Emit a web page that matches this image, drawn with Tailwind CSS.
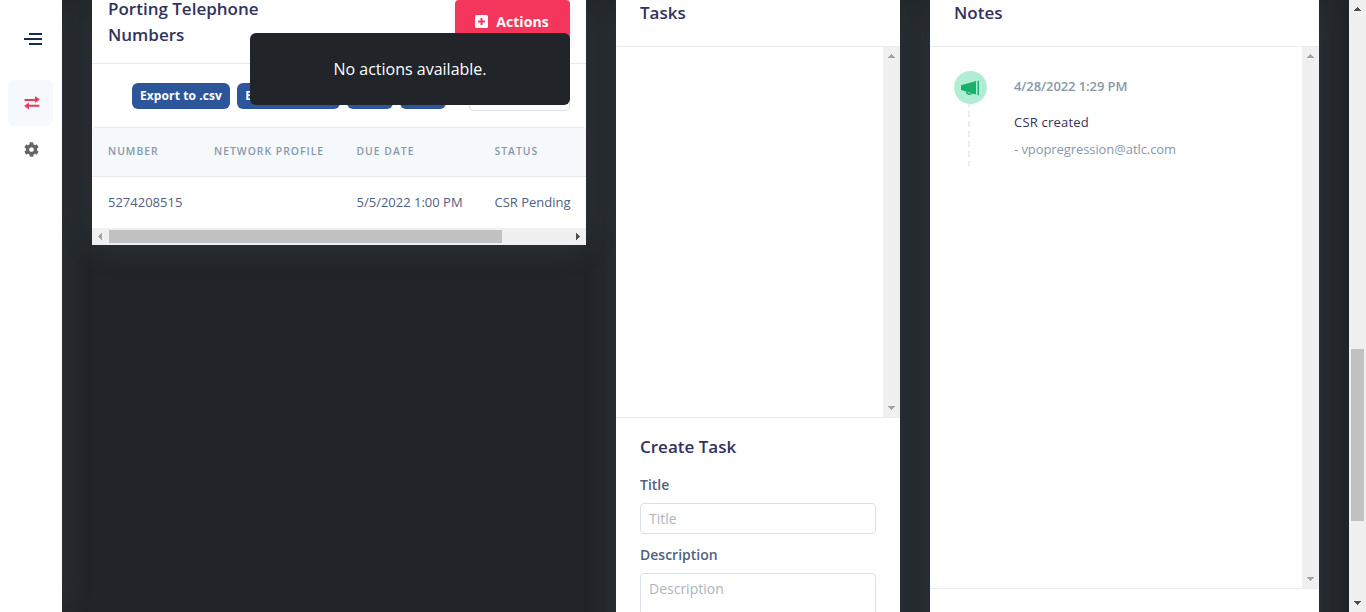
<!DOCTYPE html>
<html lang="en">
<head>
<meta charset="utf-8">
<title>Porting Order</title>
<script src="https://cdn.jsdelivr.net/npm/@tailwindcss/browser@4"></script>
</head>
<body class="h-[612px] overflow-hidden bg-[#212529] font-['Open_Sans',sans-serif] text-[#525f7f]">
<div class="flex h-[612px] w-[1366px] overflow-hidden">
  <nav class="flex w-[62px] shrink-0 flex-col items-center bg-white shadow-[0_0_32px_rgba(136,152,170,0.15)]">
    <button class="mt-[32px] flex h-[14px] w-[62px] justify-center pl-1" aria-label="Menu">
      <svg class="h-[14px] w-[18px]" viewBox="0 0 18 14" shape-rendering="crispEdges" fill="#172b4d"><path d="M5 1h13v2H5zM0 6h18v2H0zM5 11h13v2H5z"/></svg>
    </button>
    <a class="mt-[34px] mr-px flex h-[46px] w-[45px] items-center justify-center rounded-md bg-[#f6f9fc]">
      <svg class="ml-[2px] h-[14px] w-[16px] -translate-y-px" viewBox="0 0 16 14" fill="#f5365c"><path d="M1 4h10V1.700q0-.8.7-.2l3.600 2.500q.5.5 0 1l-3.600 2.500q-.7.5-.7-.2V6H1q-.5 0-.5-.5v-1Q.5 4 1 4z"/><path d="M15 9.700H5V8.100q0-.8-.7-.2l-3.600 2.500q-.5.5 0 1l3.600 2.500q.7.5.7-.2v-2H15q.5 0 .5-.5v-1q0-.5-.5-.5z"/></svg>
    </a>
    <svg class="mt-4 h-[15px] w-[15px]" viewBox="0 0 512 512" fill="#666"><path d="M487.400 315.700l-42.600-24.600c4.300-23.200 4.300-47 0-70.200l42.600-24.600c4.900-2.800 7.100-8.600 5.500-14-11.100-35.600-30-67.800-54.700-94.600-3.800-4.100-10-5.100-14.800-2.300L380.800 110c-17.900-15.400-38.500-27.300-60.800-35.100V25.800c0-5.600-3.900-10.500-9.400-11.700-36.700-8.200-74.300-7.800-109.200 0-5.500 1.200-9.400 6.100-9.400 11.700V75c-22.200 7.900-42.800 19.800-60.800 35.100L88.700 85.500c-4.900-2.800-11-1.900-14.800 2.300-24.700 26.700-43.600 58.900-54.700 94.600-1.700 5.400.6 11.200 5.500 14L67.300 221c-4.300 23.200-4.300 47 0 70.200l-42.600 24.600c-4.900 2.800-7.100 8.600-5.500 14 11.100 35.600 30 67.800 54.700 94.600 3.800 4.100 10 5.100 14.800 2.300l42.600-24.600c17.900 15.400 38.500 27.300 60.800 35.100v49.200c0 5.600 3.900 10.500 9.400 11.700 36.700 8.200 74.300 7.800 109.200 0 5.500-1.200 9.400-6.100 9.400-11.700v-49.200c22.200-7.900 42.800-19.800 60.800-35.100l42.600 24.600c4.900 2.800 11 1.900 14.800-2.300 24.700-26.700 43.600-58.900 54.700-94.600 1.500-5.500-.7-11.300-5.600-14.100zM256 336c-44.100 0-80-35.900-80-80s35.900-80 80-80 80 35.900 80 80-35.900 80-80 80z"/></svg>
  </nav>

  <main class="flex min-w-0 flex-1 items-start gap-[30px] px-[30px]">
    <section class="relative h-[245px] w-[494px] shrink-0 bg-white shadow-[0_0_32px_rgba(136,152,170,0.15)]">
      <header class="flex h-16 items-end justify-between border-b border-[#e9ecef] px-4">
        <h3 class="mb-[15px] w-[200px] text-[17px] leading-[26px] font-semibold text-[#32325d]">Porting Telephone Numbers</h3>
        <button class="mb-5 flex h-[43px] w-[115px] items-center justify-center gap-2 rounded bg-[#f5365c] text-sm font-bold tracking-[0.1px] text-white shadow-[0_4px_6px_rgba(50,50,93,0.11)]">
          <svg class="-ml-px h-[13px] w-[13px]" viewBox="0 0 13 13"><rect width="13" height="13" rx="1.500" fill="#fff"/><path d="M5.500 3h2v2.500H10v2H7.500V10h-2V7.500H3v-2h2.500z" fill="#f5365c"/></svg>
          <span>Actions</span>
        </button>
      </header>
      <div class="flex h-[63px] items-start pt-[19px] pl-10 text-[12px] leading-[26px] font-bold tracking-[0.1px] text-white">
        <button class="h-[26px] w-[98px] rounded-md bg-[#2d5599]">Export to .csv</button>
        <button class="ml-[7px] h-[26px] w-[103px] rounded-md bg-[#2d5599]">Export to .xlsx</button>
        <button class="ml-[7px] h-[26px] w-[46px] rounded-md bg-[#2d5599]">Copy</button>
        <button class="ml-[7px] h-[26px] w-[46px] rounded-md bg-[#2d5599]">Print</button>
        <div class="-mt-px ml-[23px] h-[29px] w-[101px] rounded border border-[#dee2e6]"></div>
      </div>
      <div class="grid h-[50px] grid-cols-[106px_142.5px_138px_76px] items-center rounded-t border-y border-[#e9ecef] bg-[#f6f9fc] px-4 text-[10.400px] font-semibold tracking-[1px] text-[#8898aa]">
        <span>NUMBER</span><span>NETWORK PROFILE</span><span>DUE DATE</span><span>STATUS</span>
      </div>
      <div class="grid h-[51px] grid-cols-[106px_142.5px_138px_80px] items-center px-4 text-[13px] whitespace-nowrap">
        <span>5274208515</span><span></span><span>5/5/2022 1:00 PM</span><span>CSR Pending</span>
      </div>
      <div class="flex h-[17px] items-center justify-between bg-[#f0f0f0]">
        <svg class="h-[17px] w-[17px]" viewBox="0 0 17 17" shape-rendering="crispEdges"><path d="M10 5v7L6 8.500z" fill="#a3a3a3"/></svg>
        <div class="mr-auto h-[13px] w-[393px] bg-[#c1c1c1]"></div>
        <svg class="h-[17px] w-[17px]" viewBox="0 0 17 17" shape-rendering="crispEdges"><path d="M7 5v7l4-3.500z" fill="#505050"/></svg>
      </div>
      <div class="absolute top-[33px] left-[158px] flex h-[72px] w-[320px] items-center justify-center rounded-md bg-[#212529] text-base text-white">No actions available.</div>
    </section>

    <section class="h-[650px] w-[284px] shrink-0 bg-white shadow-[0_0_32px_rgba(136,152,170,0.15)]">
      <h3 class="h-[47px] border-b border-[#e9ecef] px-6 text-[17px] leading-[26px] font-semibold text-[#32325d]">Tasks</h3>
      <div class="flex h-[370px] justify-end">
        <div class="flex w-[17px] flex-col justify-between bg-[#f0f0f0]">
          <svg class="h-[17px] w-[17px]" viewBox="0 0 17 17" shape-rendering="crispEdges"><path d="M5 11h7L8.500 7z" fill="#a3a3a3"/></svg>
          <svg class="h-[17px] w-[17px]" viewBox="0 0 17 17" shape-rendering="crispEdges"><path d="M5 6h7l-3.500 4z" fill="#a3a3a3"/></svg>
        </div>
      </div>
      <div class="border-t border-[#e9ecef] px-6 pt-4">
        <h3 class="text-[17px] leading-[26px] font-semibold text-[#32325d]">Create Task</h3>
        <label class="mt-[14px] block text-sm leading-[21px] font-semibold">Title</label>
        <input class="mt-2 block h-[31px] w-full rounded border border-[#dee2e6] px-2 text-sm placeholder:text-[#adb5bd]" placeholder="Title">
        <label class="mt-[10px] block text-sm leading-[21px] font-semibold">Description</label>
        <textarea class="mt-2 block h-[70px] w-full resize-none overflow-hidden rounded border border-[#dee2e6] px-2 py-1 text-sm leading-[21px] placeholder:text-[#adb5bd]" placeholder="Description"></textarea>
      </div>
    </section>

    <section class="h-[650px] w-[389px] shrink-0 bg-white shadow-[0_0_32px_rgba(136,152,170,0.15)]">
      <h3 class="h-[47px] border-b border-[#e9ecef] px-6 text-[17px] leading-[26px] font-semibold text-[#32325d]">Notes</h3>
      <div class="flex h-[541px] justify-between">
        <div class="flex pt-6 pl-[23.500px]">
          <div class="flex w-[33px] flex-col items-center">
            <div class="flex h-[33px] w-[33px] items-center justify-center rounded-full bg-[#b0eed3]">
              <svg class="h-[16px] w-[18px]" viewBox="0 0 18 16" fill="#1aae6f"><path d="M0 5.200L15 1v13.500L0 10zM16.500 .8H18v14.400h-1.500z"/><path d="M5.500 11.500q.5 2.700 3 2.700 2.200 0 2.700-1.300" fill="none" stroke="#1aae6f" stroke-width="1.400"/></svg>
            </div>
            <svg class="mr-[2px] h-[62px] w-[2px]" viewBox="0 0 2 62" shape-rendering="crispEdges"><path d="M1 0v62" stroke="#e9ecef" stroke-width="2" stroke-dasharray="6 4" stroke-dashoffset="3"/></svg>
          </div>
          <div class="ml-[27.500px] text-[13px] leading-5">
            <div class="mt-[5px] font-semibold tracking-[-0.080px] text-[#8898aa]">4/28/2022 1:29 PM</div>
            <div class="mt-4 tracking-[0.200px] text-[#32325d]">CSR created</div>
            <div class="mt-[7px] tracking-[-0.080px] text-[#8898aa]">- vpopregression@atlc.com</div>
          </div>
        </div>
        <div class="flex w-[17px] flex-col justify-between bg-[#f0f0f0]">
          <svg class="h-[17px] w-[17px]" viewBox="0 0 17 17" shape-rendering="crispEdges"><path d="M5 11h7L8.500 7z" fill="#a3a3a3"/></svg>
          <svg class="h-[17px] w-[17px]" viewBox="0 0 17 17" shape-rendering="crispEdges"><path d="M5 6h7l-3.500 4z" fill="#a3a3a3"/></svg>
        </div>
      </div>
      <h3 class="border-t border-[#e9ecef] px-6 pt-4 text-[17px] leading-[26px] font-semibold text-[#32325d]">Add Note</h3>
    </section>
  </main>

  <div class="flex w-[17px] shrink-0 flex-col items-center bg-[#f0f0f0]">
    <svg class="h-[17px] w-[17px]" viewBox="0 0 17 17" shape-rendering="crispEdges"><path d="M5 11h7L8.500 7z" fill="#505050"/></svg>
    <div class="mt-[332px] mb-auto h-[172px] w-[13px] bg-[#c1c1c1]"></div>
    <svg class="h-[17px] w-[17px]" viewBox="0 0 17 17" shape-rendering="crispEdges"><path d="M5 6h7l-3.500 4z" fill="#505050"/></svg>
  </div>
</div>
</body>
</html>
